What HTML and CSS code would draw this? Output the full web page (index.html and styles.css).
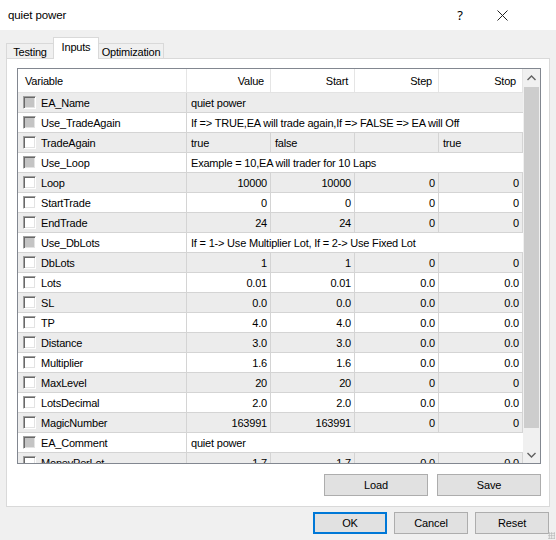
FILE: index.html
```html
<!DOCTYPE html>
<html>
<head>
<meta charset="utf-8">
<link rel="stylesheet" href="styles.css">
</head>
<body>
<div class="titlebar">
  <span class="title">quiet power</span>
  <span class="cap help">?</span>
  <span class="cap close"><svg width="11" height="11" viewBox="0 0 11 11"><path d="M0.5 0.5 L10.5 10.5 M10.5 0.5 L0.5 10.5" stroke="#222" stroke-width="1" fill="none"/></svg></span>
</div>
<div class="tabs">
  <div class="tab t1">Testing</div>
  <div class="tab t2 active">Inputs</div>
  <div class="tab t3">Optimization</div>
</div>
<div class="panel">
  <div class="list">
    <div class="grid">
      <div class="row header">
        <div class="c name">Variable</div><div class="c num">Value</div><div class="c num">Start</div><div class="c num">Step</div><div class="c num">Stop</div>
      </div>
      <div class="row span odd"><div class="c name"><i class="chk dis"></i>EA_Name</div><div class="c txt">quiet power</div></div>
      <div class="row span"><div class="c name"><i class="chk dis"></i>Use_TradeAgain</div><div class="c txt">If =&gt; TRUE,EA will trade again,If =&gt; FALSE =&gt; EA will Off</div></div>
      <div class="row odd"><div class="c name"><i class="chk"></i>TradeAgain</div><div class="c txt">true</div><div class="c txt">false</div><div class="c txt"></div><div class="c txt">true</div></div>
      <div class="row span"><div class="c name"><i class="chk dis"></i>Use_Loop</div><div class="c txt">Example = 10,EA will trader for 10 Laps</div></div>
      <div class="row odd"><div class="c name"><i class="chk"></i>Loop</div><div class="c num">10000</div><div class="c num">10000</div><div class="c num">0</div><div class="c num">0</div></div>
      <div class="row"><div class="c name"><i class="chk"></i>StartTrade</div><div class="c num">0</div><div class="c num">0</div><div class="c num">0</div><div class="c num">0</div></div>
      <div class="row odd"><div class="c name"><i class="chk"></i>EndTrade</div><div class="c num">24</div><div class="c num">24</div><div class="c num">0</div><div class="c num">0</div></div>
      <div class="row span"><div class="c name"><i class="chk dis"></i>Use_DbLots</div><div class="c txt">If = 1-&gt; Use Multiplier Lot, If = 2-&gt; Use Fixed Lot</div></div>
      <div class="row odd"><div class="c name"><i class="chk"></i>DbLots</div><div class="c num">1</div><div class="c num">1</div><div class="c num">0</div><div class="c num">0</div></div>
      <div class="row"><div class="c name"><i class="chk"></i>Lots</div><div class="c num">0.01</div><div class="c num">0.01</div><div class="c num">0.0</div><div class="c num">0.0</div></div>
      <div class="row odd"><div class="c name"><i class="chk"></i>SL</div><div class="c num">0.0</div><div class="c num">0.0</div><div class="c num">0.0</div><div class="c num">0.0</div></div>
      <div class="row"><div class="c name"><i class="chk"></i>TP</div><div class="c num">4.0</div><div class="c num">4.0</div><div class="c num">0.0</div><div class="c num">0.0</div></div>
      <div class="row odd"><div class="c name"><i class="chk"></i>Distance</div><div class="c num">3.0</div><div class="c num">3.0</div><div class="c num">0.0</div><div class="c num">0.0</div></div>
      <div class="row"><div class="c name"><i class="chk"></i>Multiplier</div><div class="c num">1.6</div><div class="c num">1.6</div><div class="c num">0.0</div><div class="c num">0.0</div></div>
      <div class="row odd"><div class="c name"><i class="chk"></i>MaxLevel</div><div class="c num">20</div><div class="c num">20</div><div class="c num">0</div><div class="c num">0</div></div>
      <div class="row"><div class="c name"><i class="chk"></i>LotsDecimal</div><div class="c num">2.0</div><div class="c num">2.0</div><div class="c num">0.0</div><div class="c num">0.0</div></div>
      <div class="row odd"><div class="c name"><i class="chk"></i>MagicNumber</div><div class="c num">163991</div><div class="c num">163991</div><div class="c num">0</div><div class="c num">0</div></div>
      <div class="row span"><div class="c name"><i class="chk dis"></i>EA_Comment</div><div class="c txt">quiet power</div></div>
      <div class="row odd"><div class="c name"><i class="chk"></i>MoneyPerLot</div><div class="c num">1.7</div><div class="c num">1.7</div><div class="c num">0.0</div><div class="c num">0.0</div></div>
    </div>
    <div class="scrollbar">
      <div class="arrow"><svg width="9" height="6" viewBox="0 0 9 6"><path d="M0.5 5 L4.5 1 L8.5 5" stroke="#606060" stroke-width="1.4" fill="none"/></svg></div>
      <div class="track"><div class="thumb"></div></div>
      <div class="arrow"><svg width="9" height="6" viewBox="0 0 9 6"><path d="M0.5 1 L4.5 5 L8.5 1" stroke="#606060" stroke-width="1.4" fill="none"/></svg></div>
    </div>
  </div>
  <div class="panel-buttons">
    <button class="btn wide">Load</button>
    <button class="btn wide">Save</button>
  </div>
</div>
<div class="dialog-buttons">
  <button class="btn def">OK</button>
  <button class="btn">Cancel</button>
  <button class="btn">Reset</button>
</div>
<div class="grip"></div>
</body>
</html>
```
FILE: styles.css
```css
* { box-sizing: border-box; }
html, body { margin: 0; padding: 0; }
body {
  width: 556px;
  height: 540px;
  background: #f0f0f0;
  font-family: "Liberation Sans", Arial, sans-serif;
  font-size: 11px;
  letter-spacing: -0.2px;
  color: #000;
  overflow: hidden;
  position: relative;
}
.titlebar {
  height: 30px;
  background: #fff;
  display: flex;
  align-items: center;
}
.title {
  flex: 1;
  margin-left: 8px;
  font-size: 11.5px;
  letter-spacing: -0.1px;
  padding-bottom: 1px;
}
.cap {
  width: 42px;
  display: flex;
  justify-content: center;
  align-items: center;
}
.help { font-size: 13px; font-family: "Noto Sans", sans-serif; }
.close { margin-right: 33px; }

.tabs {
  display: flex;
  align-items: flex-end;
  height: 21px;
  margin: 7px 0 0 6px;
  position: relative;
  z-index: 2;
}
.tab {
  height: 15px;
  border: 1px solid #d9d9d9;
  border-bottom: none;
  background: #f0f0f0;
  display: flex;
  align-items: center;
  justify-content: center;
  padding-top: 1px;
}
.t1 { width: 47px; border-right: none; }
.t2 { width: 46px; }
.t3 { width: 65px; border-left: none; }
.tab.active {
  height: 22px;
  margin-bottom: -1px;
  background: #fff;
  align-items: flex-start;
  padding-top: 3px;
}
.panel {
  margin-left: 6px;
  width: 544px;
  height: 449px;
  border: 1px solid #d9d9d9;
  background: #fff;
  padding: 9px 0 0 10px;
}
.list {
  width: 524px;
  height: 396px;
  border: 1px solid #828790;
  display: flex;
  overflow: hidden;
  background: #fff;
}
.grid {
  width: 505px;
  overflow: hidden;
}
.row {
  display: grid;
  grid-template-columns: 169px 84px 84px 84px 84px;
  height: 20px;
  border-bottom: 1px solid #d4d4d4;
  background: #fff;
}
.row.odd { background: #ececec; }
.row.span { grid-template-columns: 169px 336px; }
.row.header {
  height: 24px;
  border-bottom: 1px solid #e3e3e3;
  background: #fff;
}
.c {
  border-right: 1px solid #d4d4d4;
  display: flex;
  align-items: center;
  white-space: nowrap;
  overflow: hidden;
}
.row.span .c.txt { border-right: none; }
.header .c { border-right-color: #e5e5e5; }
.header .c.name { padding-left: 7px; }
.header .c.num { padding-right: 6px; }
.c.name { padding-left: 5px; }
.c.num { justify-content: flex-end; padding-right: 3px; }
.c.txt { padding-left: 4px; }
.chk {
  display: inline-block;
  flex: none;
  width: 13px;
  height: 13px;
  margin-right: 5px;
  background: #fff;
  border: 1px solid;
  border-color: #a0a0a0 #fff #fff #a0a0a0;
  box-shadow: inset 1px 1px 0 #696969, inset -1px -1px 0 #e3e3e3;
}
.chk.dis { background: #c4c4c4; }

.scrollbar {
  width: 17px;
  background: #f0f0f0;
  display: flex;
  flex-direction: column;
}
.arrow {
  height: 17px;
  display: flex;
  align-items: center;
  justify-content: center;
  flex: none;
}
.track {
  flex: 1;
  padding: 1px 1px 0 1px;
}
.thumb {
  height: 341px;
  background: #cdcdcd;
}

.panel-buttons {
  display: flex;
  justify-content: flex-end;
  gap: 9px;
  width: 524px;
  margin-top: 10px;
}
.btn {
  width: 74px;
  height: 22px;
  background: #e1e1e1;
  border: 1px solid #adadad;
  font-family: "Liberation Sans", Arial, sans-serif;
  font-size: 11px;
  letter-spacing: -0.1px;
  color: #000;
  padding: 0;
  margin: 0;
}
.btn.wide { width: 104px; }
.btn.def { border: 2px solid #0078d7; }
.dialog-buttons {
  display: flex;
  justify-content: flex-end;
  gap: 7px;
  margin: 5px 7px 0 0;
}
.grip {
  position: absolute;
  right: 1px;
  bottom: 1px;
  width: 7px;
  height: 7px;
  background-image: radial-gradient(circle, #b8b8b8 0.8px, transparent 1px);
  background-size: 2.5px 2.5px;
}
```
